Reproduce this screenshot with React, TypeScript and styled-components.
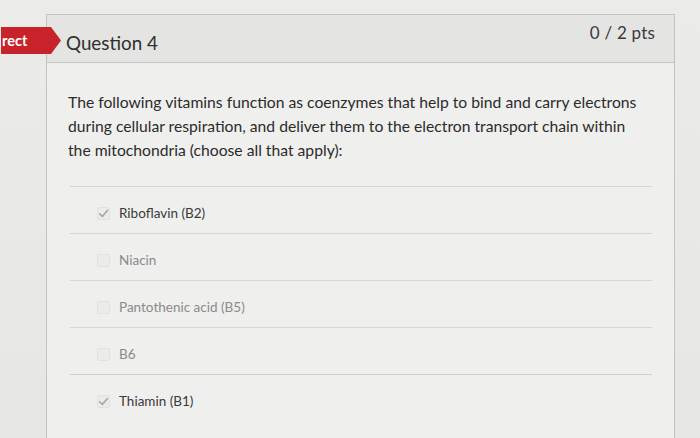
import React from "react";
import styled, { createGlobalStyle } from "styled-components";

const GlobalStyle = createGlobalStyle`
  html, body {
    margin: 0;
    padding: 0;
    background: #e8e8e6;
    font-family: Lato, "Open Sans", "Liberation Sans", sans-serif;
    overflow: hidden;
  }
`;

const Page = styled.div`
  width: 700px;
  height: 438px;
  box-sizing: border-box;
  padding: 14px 25px 0 46px;
  background: linear-gradient(180deg, #ebebea 0%, #e6e6e4 100%);
`;

const Card = styled.section`
  position: relative;
  height: 440px;
  border: 1px solid #c3c3c1;
  background: #efefed;
`;

const Tab = styled.div`
  position: absolute;
  left: -46px;
  top: 12px;
  width: 60px;
  height: 27px;
  box-sizing: border-box;
  padding-left: 1px;
  background: #c8222b;
  clip-path: polygon(0 0, 50px 0, 60px 13.5px, 50px 27px, 0 27px);
  color: #ffffff;
  font-size: 14.5px;
  font-weight: 700;
  line-height: 27px;
`;

const Header = styled.header`
  display: flex;
  justify-content: space-between;
  align-items: flex-start;
  height: 48px;
  box-sizing: border-box;
  padding: 0 19px 0 19px;
  background: #e4e4e2;
  border-bottom: 1px solid #c6c6c4;
`;

const Title = styled.h2`
  margin: 17px 0 0;
  font-size: 18.8px;
  font-weight: 400;
  color: #2f2f2f;
  line-height: 22px;
`;

const Points = styled.div`
  margin-top: 7px;
  font-size: 17px;
  font-weight: 400;
  color: #3a3a3a;
  line-height: 22px;
  letter-spacing: 0.2px;
`;

const Body = styled.div`
  padding: 27px 22px 0 21px;
`;

const QuestionText = styled.p`
  margin: 0;
  max-width: 578px;
  font-size: 15.7px;
  line-height: 24px;
  color: #2b2b2b;
`;

const Answers = styled.ul`
  list-style: none;
  margin: 24px 0 0 2px;
  padding: 0;
`;

const Answer = styled.li`
  display: flex;
  align-items: center;
  height: 47px;
  box-sizing: border-box;
  padding: 6px 0 0 27px;
  border-top: 1px solid #d6d6d4;
  &:last-child {
    border-top-color: #cfcfcd;
  }
`;

const Box = styled.span`
  display: inline-flex;
  align-items: center;
  justify-content: center;
  width: 13px;
  height: 13px;
  box-sizing: border-box;
  border: 1px solid #e2e2e0;
  border-radius: 2px;
  background: #ebebe9;
  margin-right: 9px;
`;

const Label = styled.span<{ $selected: boolean }>`
  font-size: 13.5px;
  color: ${(p) => (p.$selected ? "#3a3a3a" : "#8b8b8b")};
`;

const Check = () => (
  <svg width="11" height="11" viewBox="0 0 10 10">
    <path d="M1.5 5.3 L4 7.6 L8.6 2.2" fill="none" stroke="#a9a9a7" strokeWidth="1.5" strokeLinecap="round" strokeLinejoin="round" />
  </svg>
);

const answers = [
  { label: "Riboflavin (B2)", selected: true },
  { label: "Niacin", selected: false },
  { label: "Pantothenic acid (B5)", selected: false },
  { label: "B6", selected: false },
  { label: "Thiamin (B1)", selected: true },
];

export default function App() {
  return (
    <>
      <GlobalStyle />
      <Page>
        <Card>
          <Tab>rect</Tab>
          <Header>
            <Title>Question 4</Title>
            <Points>0 / 2 pts</Points>
          </Header>
          <Body>
            <QuestionText>
              The following vitamins function as coenzymes that help to bind and carry electrons during cellular
              respiration, and deliver them to the electron transport chain within the mitochondria (choose all that
              apply):
            </QuestionText>
            <Answers>
              {answers.map((a) => (
                <Answer key={a.label}>
                  <Box>{a.selected && <Check />}</Box>
                  <Label $selected={a.selected}>{a.label}</Label>
                </Answer>
              ))}
            </Answers>
          </Body>
        </Card>
      </Page>
    </>
  );
}
